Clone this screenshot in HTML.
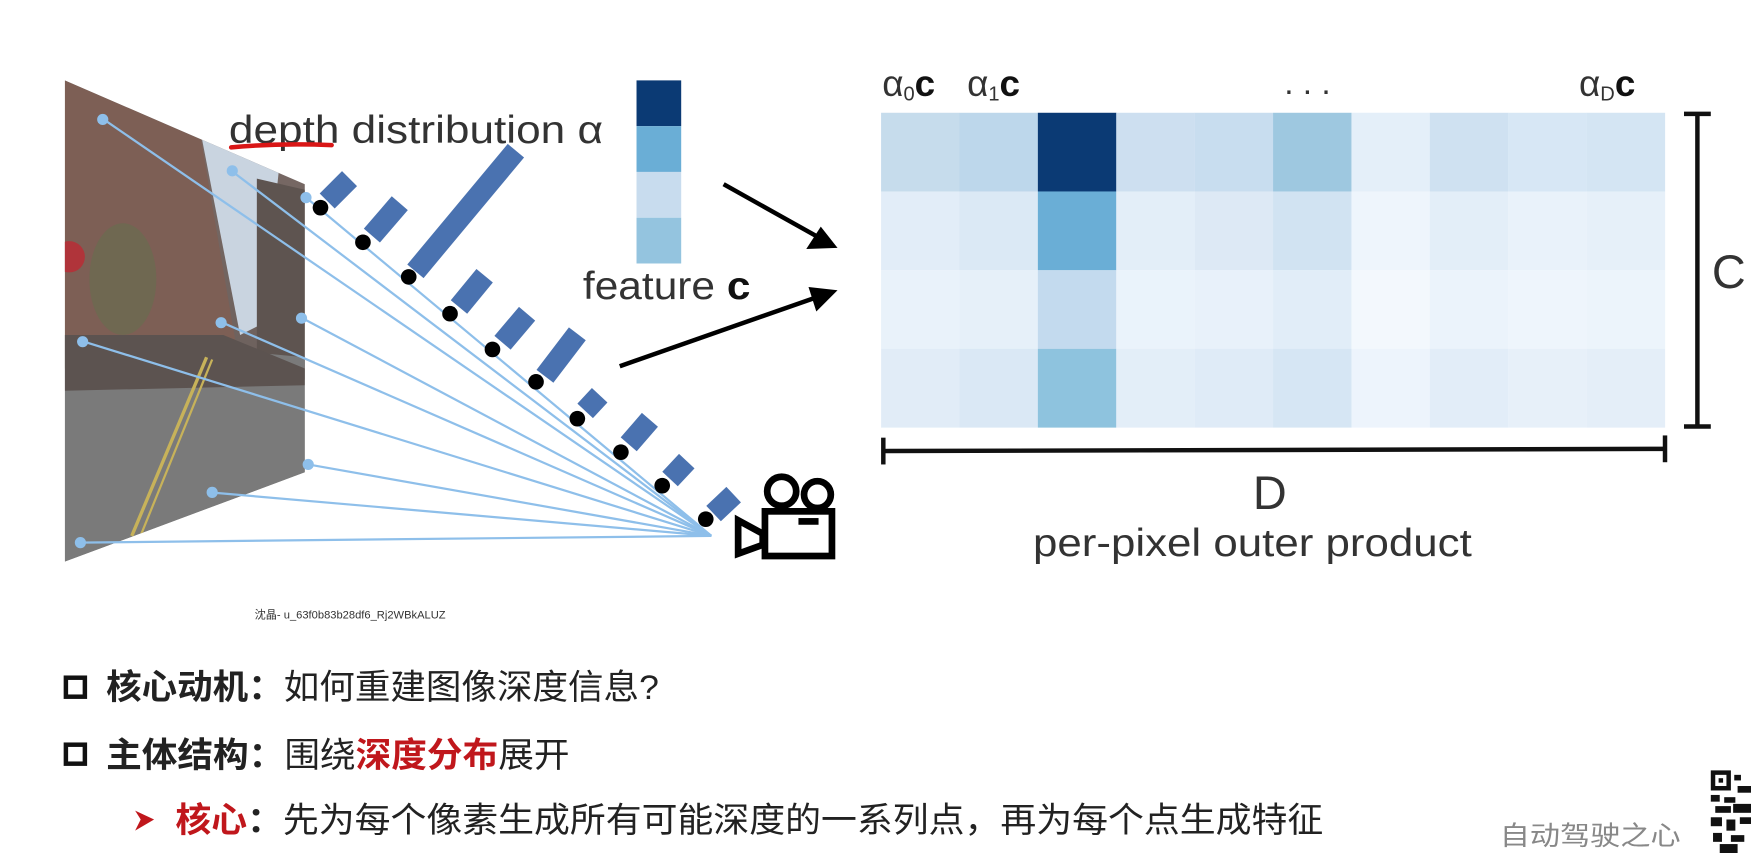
<!DOCTYPE html>
<html><head><meta charset="utf-8"><style>
html,body{margin:0;padding:0;background:#fff;width:1751px;height:853px;overflow:hidden}
svg{display:block}
</style></head><body>
<svg width="1751" height="853" viewBox="0 0 1568 764" preserveAspectRatio="none" xmlns="http://www.w3.org/2000/svg">
<defs>
<linearGradient id="road" x1="0" y1="0" x2="0" y2="1">
<stop offset="0" stop-color="#7a6a66"/><stop offset="0.55" stop-color="#6e625e"/><stop offset="0.62" stop-color="#8a8a88"/><stop offset="1" stop-color="#6f6f6f"/>
</linearGradient>
<clipPath id="ph"><polygon points="58,72 273,165 273,423 58,503"/></clipPath>
</defs>
<g clip-path="url(#ph)">
<rect x="58" y="72" width="220" height="440" fill="url(#road)"/>
<polygon points="58,72 180,125 215,330 58,330" fill="#7d5f55"/>
<polygon points="180,120 250,150 235,290 215,300" fill="#c9d4e0"/>
<polygon points="230,160 273,170 273,340 230,330" fill="#5e5450"/>
<polygon points="58,300 273,320 273,423 58,503" fill="#7a7a7a"/>
<polygon points="58,300 200,300 273,330 273,345 58,350" fill="#5c5350"/>
<path d="M118,480 L185,320" stroke="#c7b25a" stroke-width="3"/>
<path d="M125,482 L190,322" stroke="#c7b25a" stroke-width="2"/>
<circle cx="62" cy="230" r="14" fill="#b0343a"/>
<ellipse cx="110" cy="250" rx="30" ry="50" fill="#6a6c50" opacity="0.7"/>
</g>
<g stroke="#8ebfea" stroke-width="2" fill="none">
<line x1="637" y1="480" x2="90" y2="105"/>
<line x1="637" y1="480" x2="206" y2="152"/>
<line x1="637" y1="480" x2="273" y2="176"/>
<line x1="637" y1="480" x2="269" y2="284"/>
<line x1="637" y1="480" x2="197" y2="288"/>
<line x1="637" y1="480" x2="72" y2="305"/>
<line x1="637" y1="480" x2="276" y2="416"/>
<line x1="637" y1="480" x2="188" y2="441"/>
<line x1="637" y1="480" x2="70" y2="486"/>
</g>
<g fill="#8ebfea">
<circle cx="92" cy="107" r="5"/><circle cx="208" cy="153" r="5"/><circle cx="274" cy="177" r="5"/>
<circle cx="270" cy="285" r="5"/><circle cx="198" cy="289" r="5"/><circle cx="74" cy="306" r="5"/>
<circle cx="276" cy="416" r="5"/><circle cx="190" cy="441" r="5"/><circle cx="72" cy="486" r="5"/>
</g>
<g stroke="#4a72b0" stroke-width="19" stroke-linecap="butt">
<line x1="293" y1="180" x2="313" y2="160"/>
<line x1="333" y1="211" x2="358" y2="182"/>
<line x1="372" y1="243" x2="462" y2="135"/>
<line x1="411" y1="275" x2="434" y2="247"/>
<line x1="450" y1="307" x2="472" y2="281"/>
<line x1="488" y1="337" x2="517" y2="299"/>
<line x1="524" y1="368" x2="537" y2="354"/>
<line x1="563" y1="398" x2="582" y2="376"/>
<line x1="600" y1="429" x2="615" y2="413"/>
<line x1="639" y1="460" x2="657" y2="443"/>
</g>
<g fill="#000">
<circle cx="287" cy="186" r="7"/><circle cx="325" cy="217" r="7"/><circle cx="366" cy="248" r="7"/>
<circle cx="403" cy="281" r="7"/><circle cx="441" cy="313" r="7"/><circle cx="480" cy="342" r="7"/>
<circle cx="517" cy="375" r="7"/><circle cx="556" cy="405" r="7"/><circle cx="593" cy="435" r="7"/>
<circle cx="632" cy="465" r="7"/>
</g>
<g fill="none" stroke="#000" stroke-width="6">
<circle cx="700" cy="440" r="13"/><circle cx="732" cy="443" r="12"/>
<rect x="685" y="458" width="60" height="40"/>
<polygon points="661,466 683,478 683,488 661,496"/>
</g>
<rect x="715" y="464" width="18" height="6" fill="#000"/>
<g font-family="Liberation Sans, sans-serif" fill="#333">
<text x="205" y="128" font-size="35" textLength="335" lengthAdjust="spacingAndGlyphs">depth distribution α</text>
<text x="522" y="268" font-size="35" textLength="150" lengthAdjust="spacingAndGlyphs">feature <tspan font-weight="bold" fill="#111">c</tspan></text>
<text x="790" y="86" font-size="33">α<tspan font-size="18" dy="4">0</tspan><tspan dy="-4" font-weight="bold" fill="#111">c</tspan></text>
<text x="866" y="86" font-size="33">α<tspan font-size="18" dy="4">1</tspan><tspan dy="-4" font-weight="bold" fill="#111">c</tspan></text>
<text x="1150" y="84" font-size="30">. . .</text>
<text x="1414" y="86" font-size="33">α<tspan font-size="18" dy="4">D</tspan><tspan dy="-4" font-weight="bold" fill="#111">c</tspan></text>
<text x="1122" y="456" font-size="42">D</text>
<text x="925" y="498" font-size="35" textLength="393" lengthAdjust="spacingAndGlyphs">per-pixel outer product</text>
<text x="1533" y="258" font-size="42">C</text>
</g>
<path d="M207,132 Q250,128 297,130" stroke="#d91616" stroke-width="4" fill="none" stroke-linecap="round"/>
<rect x="570" y="72" width="40" height="41" fill="#0b3a74"/>
<rect x="570" y="113" width="40" height="41" fill="#6aaed6"/>
<rect x="570" y="154" width="40" height="41" fill="#c8dcee"/>
<rect x="570" y="195" width="40" height="41" fill="#94c4df"/>
<g stroke="#000" stroke-width="4">
<line x1="648" y1="165" x2="732" y2="212"/>
<line x1="555" y1="328" x2="732" y2="266"/>
</g>
<polygon points="750,222 722,223 735,203" fill="#000"/>
<polygon points="750,260 731,279 724,257" fill="#000"/>
<g transform="translate(789,101)">
<rect x="0" y="0" width="70.3" height="70.5" fill="#c6dcec"/><rect x="70.2" y="0" width="70.3" height="70.5" fill="#bdd7eb"/><rect x="140.4" y="0" width="70.3" height="70.5" fill="#0b3a74"/><rect x="210.6" y="0" width="70.3" height="70.5" fill="#cddff0"/><rect x="280.8" y="0" width="70.3" height="70.5" fill="#c8ddef"/><rect x="351" y="0" width="70.3" height="70.5" fill="#9ec8e0"/><rect x="421.2" y="0" width="70.3" height="70.5" fill="#e4eff9"/><rect x="491.4" y="0" width="70.3" height="70.5" fill="#cfe1f1"/><rect x="561.6" y="0" width="70.3" height="70.5" fill="#d7e7f5"/><rect x="631.8" y="0" width="70.3" height="70.5" fill="#d4e5f3"/>
<rect x="0" y="70.5" width="70.3" height="70.6" fill="#e2edf8"/><rect x="70.2" y="70.5" width="70.3" height="70.6" fill="#dbe9f5"/><rect x="140.4" y="70.5" width="70.3" height="70.6" fill="#6aaed6"/><rect x="210.6" y="70.5" width="70.3" height="70.6" fill="#e3eef8"/><rect x="280.8" y="70.5" width="70.3" height="70.6" fill="#dde9f5"/><rect x="351" y="70.5" width="70.3" height="70.6" fill="#d1e3f2"/><rect x="421.2" y="70.5" width="70.3" height="70.6" fill="#eef5fc"/><rect x="491.4" y="70.5" width="70.3" height="70.6" fill="#e3eef8"/><rect x="561.6" y="70.5" width="70.3" height="70.6" fill="#e9f2fa"/><rect x="631.8" y="70.5" width="70.3" height="70.6" fill="#e6f0f9"/>
<rect x="0" y="141" width="70.3" height="70.6" fill="#e9f2fa"/><rect x="70.2" y="141" width="70.3" height="70.6" fill="#e6f0f9"/><rect x="140.4" y="141" width="70.3" height="70.6" fill="#c3daee"/><rect x="210.6" y="141" width="70.3" height="70.6" fill="#eaf3fb"/><rect x="280.8" y="141" width="70.3" height="70.6" fill="#e8f1fa"/><rect x="351" y="141" width="70.3" height="70.6" fill="#e1edf8"/><rect x="421.2" y="141" width="70.3" height="70.6" fill="#f3f8fd"/><rect x="491.4" y="141" width="70.3" height="70.6" fill="#ebf3fb"/><rect x="561.6" y="141" width="70.3" height="70.6" fill="#eef5fc"/><rect x="631.8" y="141" width="70.3" height="70.6" fill="#ecf4fb"/>
<rect x="0" y="211.5" width="70.3" height="70.5" fill="#e1ecf7"/><rect x="70.2" y="211.5" width="70.3" height="70.5" fill="#dae8f5"/><rect x="140.4" y="211.5" width="70.3" height="70.5" fill="#8ec3de"/><rect x="210.6" y="211.5" width="70.3" height="70.5" fill="#e3eef8"/><rect x="280.8" y="211.5" width="70.3" height="70.5" fill="#dfebf7"/><rect x="351" y="211.5" width="70.3" height="70.5" fill="#d6e6f4"/><rect x="421.2" y="211.5" width="70.3" height="70.5" fill="#edf4fc"/><rect x="491.4" y="211.5" width="70.3" height="70.5" fill="#e2edf8"/><rect x="561.6" y="211.5" width="70.3" height="70.5" fill="#e7f0f9"/><rect x="631.8" y="211.5" width="70.3" height="70.5" fill="#e4eef8"/>
</g>
<g stroke="#111" stroke-width="4">
<line x1="1520" y1="101" x2="1520" y2="383"/>
<line x1="1508" y1="102" x2="1532" y2="102"/>
<line x1="1508" y1="382" x2="1532" y2="382"/>
<line x1="790" y1="404" x2="1492" y2="402"/>
<line x1="791" y1="392" x2="791" y2="416"/>
<line x1="1491" y1="390" x2="1491" y2="414"/>
</g>
<text x="228" y="554" font-family="Liberation Sans, 'Noto Sans CJK SC', sans-serif" font-size="10" fill="#333">沈晶- u_63f0b83b28df6_Rj2WBkALUZ</text>
<g font-family="Liberation Sans, 'Noto Sans CJK SC', sans-serif" font-size="31" fill="#222">
<rect x="59" y="607" width="17" height="17" fill="none" stroke="#111" stroke-width="4"/>
<text x="95" y="626" textLength="495" lengthAdjust="spacingAndGlyphs"><tspan font-weight="bold">核心动机：</tspan>如何重建图像深度信息?</text>
<rect x="59" y="667" width="17" height="17" fill="none" stroke="#111" stroke-width="4"/>
<text x="95" y="687" textLength="415" lengthAdjust="spacingAndGlyphs"><tspan font-weight="bold">主体结构：</tspan>围绕<tspan fill="#c0171c" font-weight="bold">深度分布</tspan>展开</text>
<polygon points="121,726 138,734 121,744 126,734" fill="#c0171c"/>
<text x="157" y="745" textLength="1028" lengthAdjust="spacingAndGlyphs"><tspan fill="#c0171c" font-weight="bold">核心</tspan><tspan font-weight="bold">：</tspan>先为每个像素生成所有可能深度的一系列点，再为每个点生成特征</text>
</g>
<text x="1343" y="757" font-family="Liberation Sans, 'Noto Sans CJK SC', sans-serif" font-size="24" fill="#888" textLength="162" lengthAdjust="spacingAndGlyphs">自动驾驶之心</text>
<g fill="#111">
<rect x="1530" y="690" width="38" height="74" fill="#fff"/>
<rect x="1532" y="690" width="18" height="18"/><rect x="1536" y="694" width="10" height="10" fill="#fff"/><rect x="1539" y="697" width="4" height="4"/>
<rect x="1553" y="694" width="6" height="5"/><rect x="1532" y="712" width="8" height="6"/><rect x="1544" y="714" width="10" height="5"/>
<rect x="1556" y="704" width="12" height="6"/><rect x="1536" y="722" width="14" height="6"/><rect x="1552" y="720" width="16" height="8"/>
<rect x="1532" y="732" width="10" height="8"/><rect x="1546" y="734" width="8" height="10"/><rect x="1558" y="732" width="10" height="6"/>
<rect x="1534" y="746" width="8" height="8"/><rect x="1550" y="748" width="12" height="6"/><rect x="1540" y="756" width="16" height="8"/>
</g>
</svg>
</body></html>
